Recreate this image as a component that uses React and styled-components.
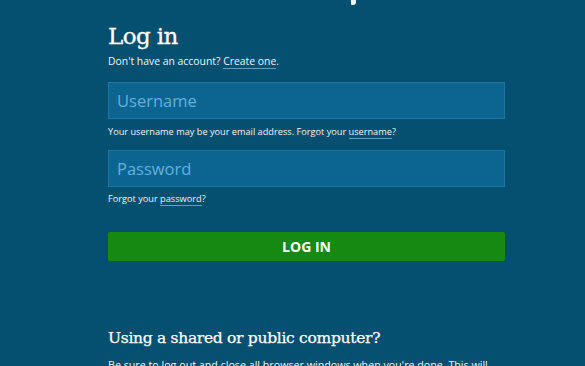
import React from 'react'
import styled, { createGlobalStyle } from 'styled-components'

const GlobalStyle = createGlobalStyle`
  html, body {
    margin: 0;
    padding: 0;
    background: #054f70;
    overflow: hidden;
  }
  body {
    font-family: "Open Sans", "Noto Sans", sans-serif;
    color: #eef5f8;
  }
`

const Page = styled.div`
  position: relative;
  width: 585px;
  height: 366px;
  background: #054f70;
  overflow: hidden;
`

const Column = styled.div`
  width: 397px;
  margin-left: 108px;
  padding-top: 20px;
  display: flex;
  flex-direction: column;
`

const Title = styled.h1`
  margin: 0;
  font-family: "DejaVu Serif", serif;
  font-weight: normal;
  font-size: 23px;
  line-height: 32px;
  color: #ffffff;
  letter-spacing: -0.6px;
  -webkit-text-stroke: 0.3px #ffffff;
`

const Note = styled.p`
  margin: ${(p) => p.$margin || '0'};
  font-size: ${(p) => p.$size || '9.2px'};
  line-height: 14px;
  color: #eef5f8;
`

const TextLink = styled.a`
  color: #eef5f8;
  text-decoration: none;
  border-bottom: 1px solid #5f9fc0;
`

const Input = styled.input`
  box-sizing: border-box;
  width: 100%;
  height: 37px;
  margin: ${(p) => p.$margin || '0'};
  padding: 0 8px;
  background: #0c6590;
  border: 1px solid #1b76a3;
  border-radius: 0;
  font-family: "Open Sans", sans-serif;
  font-size: 16.5px;
  color: #ffffff;
  outline: none;

  &::placeholder {
    color: #64b0dc;
  }
`

const SubmitButton = styled.button`
  width: 100%;
  height: 29px;
  margin-top: 26px;
  border: none;
  border-radius: 2px;
  background: #168a10;
  color: #ffffff;
  font-family: "Open Sans", sans-serif;
  font-weight: bold;
  font-size: 14px;
`

const SubHeading = styled.h2`
  margin: 66px 0 0;
  font-family: "DejaVu Serif", serif;
  font-weight: normal;
  font-size: 15.5px;
  line-height: 22px;
  color: #ffffff;
  letter-spacing: -0.3px;
  -webkit-text-stroke: 0.25px #ffffff;
`

const Blurb = styled.p`
  margin: 8px 0 0;
  font-size: 10.7px;
  line-height: 16px;
  color: #eef5f8;
`

const CursorMark = styled.div`
  position: absolute;
  left: 351px;
  top: 0;
  width: 5px;
  height: 5px;
  background: #ffffff;
  border-radius: 0 0 3px 1px;
`

export default function App() {
  return (
    <Page>
      <GlobalStyle />
      <CursorMark />
      <Column>
        <Title>Log in</Title>
        <Note $size="10.4px" $margin="2px 0 0">
          Don't have an account? <TextLink href="#">Create one</TextLink>.
        </Note>
        <Input placeholder="Username" $margin="14px 0 0" />
        <Note $margin="6px 0 0">
          Your username may be your email address. Forgot your{' '}
          <TextLink href="#">username</TextLink>?
        </Note>
        <Input type="password" placeholder="Password" $margin="11px 0 0" />
        <Note $margin="5px 0 0">
          Forgot your <TextLink href="#">password</TextLink>?
        </Note>
        <SubmitButton>LOG IN</SubmitButton>
        <SubHeading>Using a shared or public computer?</SubHeading>
        <Blurb>
          Be sure to log out and close all browser windows when you're done. This will
          help keep your account secure.
        </Blurb>
      </Column>
    </Page>
  )
}
